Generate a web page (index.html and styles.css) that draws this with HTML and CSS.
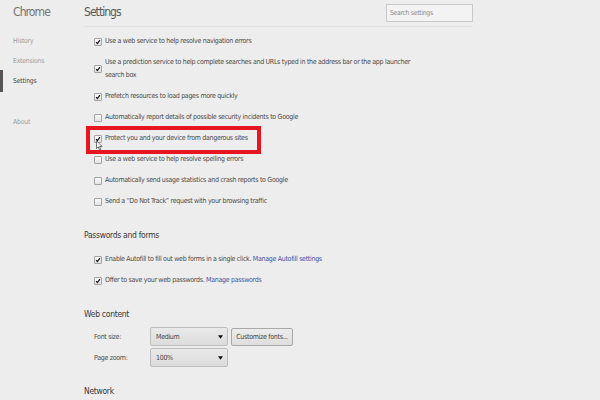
FILE: index.html
```html
<!DOCTYPE html>
<html lang="en">
<head>
<meta charset="utf-8">
<title>Settings</title>
<link rel="stylesheet" href="styles.css">
</head>
<body>
<div class="app">
  <nav class="sidebar">
    <h1 class="brand">Chrome</h1>
    <ul class="nav">
      <li>History</li>
      <li>Extensions</li>
      <li class="active">Settings</li>
      <li class="about">About</li>
    </ul>
  </nav>
  <main class="main">
    <header class="header">
      <h2 class="title">Settings</h2>
      <div class="search">Search settings</div>
    </header>

    <section class="group first">
      <div class="row"><span class="cb on"><svg viewBox="0 0 8 8"><path d="M1.6 4.2 L3.2 6.2 L6.6 1.4" /></svg></span><span class="txt">Use a web service to help resolve navigation errors</span></div>
      <div class="row"><span class="cb on"><svg viewBox="0 0 8 8"><path d="M1.6 4.2 L3.2 6.2 L6.6 1.4" /></svg></span><span class="txt">Use a prediction service to help complete searches and URLs typed in the address bar or the app launcher search box</span></div>
      <div class="row"><span class="cb on"><svg viewBox="0 0 8 8"><path d="M1.6 4.2 L3.2 6.2 L6.6 1.4" /></svg></span><span class="txt">Prefetch resources to load pages more quickly</span></div>
      <div class="row"><span class="cb"></span><span class="txt">Automatically report details of possible security incidents to Google</span></div>
      <div class="row marked">
        <span class="cb on"><svg viewBox="0 0 8 8"><path d="M1.6 4.2 L3.2 6.2 L6.6 1.4" /></svg></span><span class="txt">Protect you and your device from dangerous sites</span>
        <span class="highlight"></span>
        <svg class="cursor" viewBox="0 0 8 12"><path d="M0.5 0.5 L0.5 9.5 L2.6 7.6 L4 11 L5.4 10.4 L4 7.2 L7 7.2 Z" /></svg>
      </div>
      <div class="row"><span class="cb"></span><span class="txt">Use a web service to help resolve spelling errors</span></div>
      <div class="row"><span class="cb"></span><span class="txt">Automatically send usage statistics and crash reports to Google</span></div>
      <div class="row"><span class="cb"></span><span class="txt">Send a “Do Not Track” request with your browsing traffic</span></div>
    </section>

    <section class="group">
      <h3 class="group-title">Passwords and forms</h3>
      <div class="row"><span class="cb on"><svg viewBox="0 0 8 8"><path d="M1.6 4.2 L3.2 6.2 L6.6 1.4" /></svg></span><span class="txt">Enable Autofill to fill out web forms in a single click. <a class="link">Manage Autofill settings</a></span></div>
      <div class="row"><span class="cb on"><svg viewBox="0 0 8 8"><path d="M1.6 4.2 L3.2 6.2 L6.6 1.4" /></svg></span><span class="txt">Offer to save your web passwords. <a class="link">Manage passwords</a></span></div>
    </section>

    <section class="group">
      <h3 class="group-title tight">Web content</h3>
      <div class="frow">
        <span class="flabel">Font size:</span>
        <div class="select"><span>Medium</span><svg class="arrow" viewBox="0 0 6 4"><path d="M0 0 L6 0 L3 4 Z"/></svg></div>
        <div class="button">Customize fonts...</div>
      </div>
      <div class="frow">
        <span class="flabel">Page zoom:</span>
        <div class="select"><span>100%</span><svg class="arrow" viewBox="0 0 6 4"><path d="M0 0 L6 0 L3 4 Z"/></svg></div>
      </div>
    </section>

    <section class="group">
      <h3 class="group-title">Network</h3>
    </section>
  </main>
</div>
</body>
</html>
```

FILE: styles.css
```css
* { box-sizing: border-box; }
html, body { margin: 0; padding: 0; }
body {
  width: 600px;
  height: 400px;
  overflow: hidden;
  background: #ededed;
  font-family: "DejaVu Sans Condensed", "Liberation Sans", sans-serif;
  color: #4a4a4a;
}
.app { display: flex; height: 400px; }

.sidebar { width: 84px; flex: none; }
.brand {
  margin: 4px 0 0 13px;
  font-size: 12px;
  letter-spacing: -0.9px;
  line-height: 16px;
  font-weight: normal;
  color: #737373;
}
.nav { list-style: none; margin: 11px 0 0; padding: 0; }
.nav li {
  padding-left: 13px;
  font-size: 6.8px;
  letter-spacing: -0.2px;
  line-height: 20px;
  color: #9c9c9c;
}
.nav li.active {
  color: #454545;
  border-left: 3px solid #555;
  padding-left: 10px;
  line-height: 22px;
  margin: -1px 0;
}
.nav li.about { margin-top: 21px; }

.main { width: 389px; flex: none; }
.header {
  display: flex;
  justify-content: space-between;
  align-items: flex-start;
  height: 27px;
  padding-top: 4px;
  border-bottom: 1px solid #e2e2e2;
}
.title {
  margin: 0;
  font-size: 12px;
  letter-spacing: -0.95px;
  line-height: 16px;
  font-weight: normal;
  color: #585858;
}
.search {
  width: 87px;
  height: 18px;
  border: 1px solid #c9c9c9;
  background: #f3f3f3;
  font-size: 6.8px;
  letter-spacing: -0.3px;
  line-height: 16px;
  padding-left: 3px;
  color: #8a8a8a;
}

.group { margin-top: 13px; }
.group.first { margin-top: 4px; }
.group-title {
  margin: 0 0 4px;
  font-size: 8.5px;
  letter-spacing: -0.3px;
  line-height: 20px;
  font-weight: normal;
  color: #383838;
}
.group-title.tight { margin-bottom: 2px; }

.row {
  position: relative;
  display: flex;
  align-items: center;
  padding: 4px 0 4px 10px;
  font-size: 7px;
  letter-spacing: -0.3px;
  line-height: 13px;
}
.txt { max-width: 310px; }
.cb {
  flex: none;
  width: 8px;
  height: 8px;
  margin-right: 3px;
  border: 1px solid #a3a3a3;
  border-radius: 1px;
  background: linear-gradient(#fbfbfb, #e2e2e2);
  display: flex;
}
.cb svg { width: 100%; height: 100%; }
.cb path { fill: none; stroke: #111; stroke-width: 1.5; }
.link { color: #4252a6; text-decoration: none; }

.highlight {
  position: absolute;
  left: 2px;
  top: -2px;
  width: 175px;
  height: 28px;
  border: 4px solid #e8141f;
}
.cursor {
  position: absolute;
  left: 12px;
  top: 12px;
  width: 7px;
  height: 11px;
}
.cursor path { fill: #fff; stroke: #333; stroke-width: 0.8; }

.frow {
  display: flex;
  align-items: center;
  height: 21px;
  padding-left: 10px;
  font-size: 7px;
  letter-spacing: -0.3px;
}
.flabel { width: 56px; flex: none; }
.select {
  display: flex;
  align-items: center;
  justify-content: space-between;
  width: 78px;
  height: 19px;
  padding: 0 4px 0 5px;
  border: 1px solid #bdbdbd;
  border-radius: 2px;
  background: linear-gradient(#e9e9e9, #dcdcdc);
  color: #444;
}
.arrow { width: 5px; height: 4px; }
.arrow path { fill: #111; }
.button {
  margin-left: 3px;
  width: 62px;
  height: 18px;
  border: 1px solid #a9a9a9;
  border-radius: 2px;
  background: linear-gradient(#ececec, #dedede);
  line-height: 16px;
  text-align: center;
  color: #444;
}
```
